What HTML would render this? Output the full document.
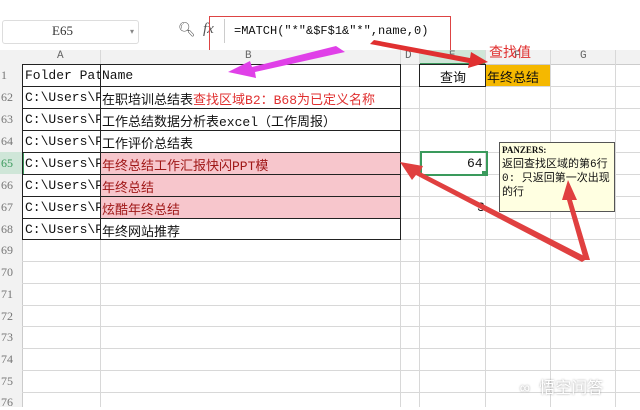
<!DOCTYPE html>
<html><head><meta charset="utf-8"><style>
body{margin:0;width:640px;height:407px;overflow:hidden;background:#fff;font-family:"Liberation Mono","Noto Sans CJK SC",monospace;position:relative}
.a{position:absolute}
.t{font-size:13px;color:#111;white-space:nowrap;overflow:hidden}
.rn{position:absolute;left:0;width:22px;font-size:12px;color:#777;font-family:"Liberation Serif",serif;text-align:left;padding-left:1px}
.cjk{font-family:"Liberation Mono","Noto Sans CJK SC",monospace}
</style></head><body>
<div class="a" style="left:0;top:0;width:640px;height:50px;background:#fff"></div>
<div class="a" style="left:2px;top:20px;width:135px;height:22px;border:1px solid #ddd;border-radius:3px"></div>
<div class="a t" style="left:52px;top:23px;font-family:'Liberation Serif',serif;font-size:13px;color:#333">E65</div>
<div class="a" style="left:130px;top:27px;font-size:8px;color:#888">▾</div>
<div class="a" style="left:178px;top:22px;font-size:14px;color:#555">&#x1F50D;&#xFE0E;</div>
<div class="a" style="left:203px;top:21px;font-size:15px;color:#555;font-style:italic;font-family:'Liberation Serif',serif">fx</div>
<div class="a" style="left:224px;top:19px;width:420px;height:24px;border-left:1px solid #ccc"></div>
<div class="a t" style="left:234px;top:24px;font-size:12px">=MATCH("*"&amp;$F$1&amp;"*",name,0)</div>
<div class="a" style="left:209px;top:16px;width:240px;height:33px;border:1px solid #d44"></div>
<div class="a" style="left:0;top:50px;width:640px;height:14px;background:#f2f2f2;border-bottom:1px solid #ccc"></div>
<div class="a" style="left:419px;top:50px;width:66px;height:14px;background:#cfe6d8"></div>
<div class="a" style="left:419px;top:63px;width:66px;height:2px;background:#3a9a5c"></div>
<div class="a" style="left:0;top:64px;width:22px;height:343px;background:#f2f2f2;border-right:1px solid #ccc"></div>
<div class="a" style="left:0;top:152px;width:22px;height:22px;background:#cfe6d8;border-right:2px solid #3a9a5c"></div>
<div class="a t" style="left:57px;top:50px;font-size:11px;color:#666">A</div>
<div class="a t" style="left:245px;top:50px;font-size:11px;color:#666">B</div>
<div class="a t" style="left:405px;top:50px;font-size:11px;color:#666">D</div>
<div class="a t" style="left:449px;top:50px;font-size:11px;color:#666">E</div>
<div class="a t" style="left:514px;top:50px;font-size:11px;color:#666">F</div>
<div class="a t" style="left:580px;top:50px;font-size:11px;color:#666">G</div>
<svg class="a" style="left:0;top:0" width="640" height="407">
<g stroke="#d8d8d8" stroke-width="1">
<line x1="100.5" y1="50" x2="100.5" y2="407"/><line x1="400.5" y1="50" x2="400.5" y2="407"/>
<line x1="419.5" y1="50" x2="419.5" y2="407"/><line x1="485.5" y1="50" x2="485.5" y2="407"/>
<line x1="550.5" y1="50" x2="550.5" y2="407"/><line x1="615.5" y1="50" x2="615.5" y2="407"/>
<line x1="22" y1="86.5" x2="640" y2="86.5"/><line x1="22" y1="108.5" x2="640" y2="108.5"/>
<line x1="22" y1="130.5" x2="640" y2="130.5"/><line x1="22" y1="152.5" x2="640" y2="152.5"/>
<line x1="22" y1="174.5" x2="640" y2="174.5"/><line x1="22" y1="196.5" x2="640" y2="196.5"/>
<line x1="22" y1="218.5" x2="640" y2="218.5"/><line x1="22" y1="239.5" x2="640" y2="239.5"/>
<line x1="22" y1="261.5" x2="640" y2="261.5"/><line x1="22" y1="283.5" x2="640" y2="283.5"/>
<line x1="22" y1="305.5" x2="640" y2="305.5"/><line x1="22" y1="326.5" x2="640" y2="326.5"/>
<line x1="22" y1="348.5" x2="640" y2="348.5"/><line x1="22" y1="370.5" x2="640" y2="370.5"/>
<line x1="22" y1="392.5" x2="640" y2="392.5"/>
</g>
</svg>
<div class="a" style="left:101px;top:153px;width:299px;height:65px;background:#f7c6cc"></div>
<svg class="a" style="left:0;top:0" width="640" height="407">
<g stroke="#222" stroke-width="1" fill="none">
<rect x="22.5" y="64.5" width="378" height="175"/>
<line x1="100.5" y1="64" x2="100.5" y2="240"/>
<line x1="22" y1="86.5" x2="400" y2="86.5"/><line x1="22" y1="108.5" x2="400" y2="108.5"/>
<line x1="22" y1="130.5" x2="400" y2="130.5"/><line x1="22" y1="152.5" x2="400" y2="152.5"/>
<line x1="22" y1="174.5" x2="400" y2="174.5"/><line x1="22" y1="196.5" x2="400" y2="196.5"/>
<line x1="22" y1="218.5" x2="400" y2="218.5"/>
</g>
<rect x="419.5" y="64.5" width="66" height="22" fill="none" stroke="#222"/>
</svg>
<div class="a" style="left:486px;top:65px;width:64px;height:21px;background:#f5b800"></div>
<div class="rn" style="top:68px">1</div>
<div class="rn" style="top:90px">62</div><div class="rn" style="top:112px">63</div>
<div class="rn" style="top:134px">64</div><div class="rn" style="top:156px;color:#3a9a5c">65</div>
<div class="rn" style="top:178px">66</div><div class="rn" style="top:200px">67</div>
<div class="rn" style="top:222px">68</div><div class="rn" style="top:243px">69</div>
<div class="rn" style="top:265px">70</div><div class="rn" style="top:287px">71</div>
<div class="rn" style="top:309px">72</div><div class="rn" style="top:330px">73</div>
<div class="rn" style="top:352px">74</div><div class="rn" style="top:374px">75</div>
<div class="rn" style="top:395px">76</div>
<div class="a t" style="left:25px;top:68px;width:75px">Folder Path</div>
<div class="a t" style="left:25px;top:90px;width:75px">C:\Users\P</div>
<div class="a t" style="left:25px;top:112px;width:75px">C:\Users\P</div>
<div class="a t" style="left:25px;top:134px;width:75px">C:\Users\P</div>
<div class="a t" style="left:25px;top:156px;width:75px">C:\Users\P</div>
<div class="a t" style="left:25px;top:178px;width:75px">C:\Users\P</div>
<div class="a t" style="left:25px;top:200px;width:75px">C:\Users\P</div>
<div class="a t" style="left:25px;top:222px;width:75px">C:\Users\P</div>
<div class="a t" style="left:102px;top:68px">Name</div>
<div class="a t cjk" style="left:102px;top:89px">在职培训总结表<span style="color:#e03030">查找区域B2：B68为已定义名称</span></div>
<div class="a t cjk" style="left:102px;top:111px">工作总结数据分析表excel（工作周报）</div>
<div class="a t cjk" style="left:102px;top:133px">工作评价总结表</div>
<div class="a t cjk" style="left:102px;top:155px;color:#a01818">年终总结工作汇报快闪PPT模</div>
<div class="a t cjk" style="left:102px;top:177px;color:#a01818">年终总结</div>
<div class="a t cjk" style="left:102px;top:199px;color:#a01818">炫酷年终总结</div>
<div class="a t cjk" style="left:102px;top:221px">年终网站推荐</div>
<div class="a t cjk" style="left:440px;top:67px">查询</div>
<div class="a t cjk" style="left:487px;top:67px">年终总结</div>
<div class="a t cjk" style="left:489px;top:42px;color:#e03030;font-size:14px">查找值</div>
<div class="a" style="left:420px;top:151px;width:64px;height:21px;border:2px solid #3a9a5c"></div>
<div class="a t" style="left:467px;top:156px">64</div>
<div class="a" style="left:482px;top:171px;width:5px;height:5px;background:#3a9a5c"></div>
<div class="a t" style="left:477px;top:200px">3</div>
<div class="a" style="left:499px;top:142px;width:114px;height:68px;background:#ffffe1;border:1px solid #555"></div>
<div class="a cjk" style="left:502px;top:143px;font-size:11px;line-height:14px;color:#111;width:110px"><b style="font-family:'Liberation Serif',serif;font-size:9px">PANZERS:</b><br>返回查找区域的第6行<br>0: 只返回第一次出现的行</div>
<svg class="a" style="left:0;top:0" width="640" height="407">
<polygon points="336,46 345,52 255,72 256,78 228,72 250,61 252,67" fill="#e040e8"/>
<polygon points="370,44 374,40 470,58 471,52 488,62 468,68 469,63" fill="#e03030"/>
<polygon points="582,262 588,258 420,172 423,166 400,162 412,180 416,175" fill="#e04040"/>
<polygon points="584,260 590,260 572,200 577,200 568,180 562,200 567,200" fill="#e04040"/>
</svg>
<div class="a cjk" style="left:520px;top:374px;font-size:16px;color:#fff;text-shadow:0 0 2px #999">∞ 悟空问答</div>
</body></html>
